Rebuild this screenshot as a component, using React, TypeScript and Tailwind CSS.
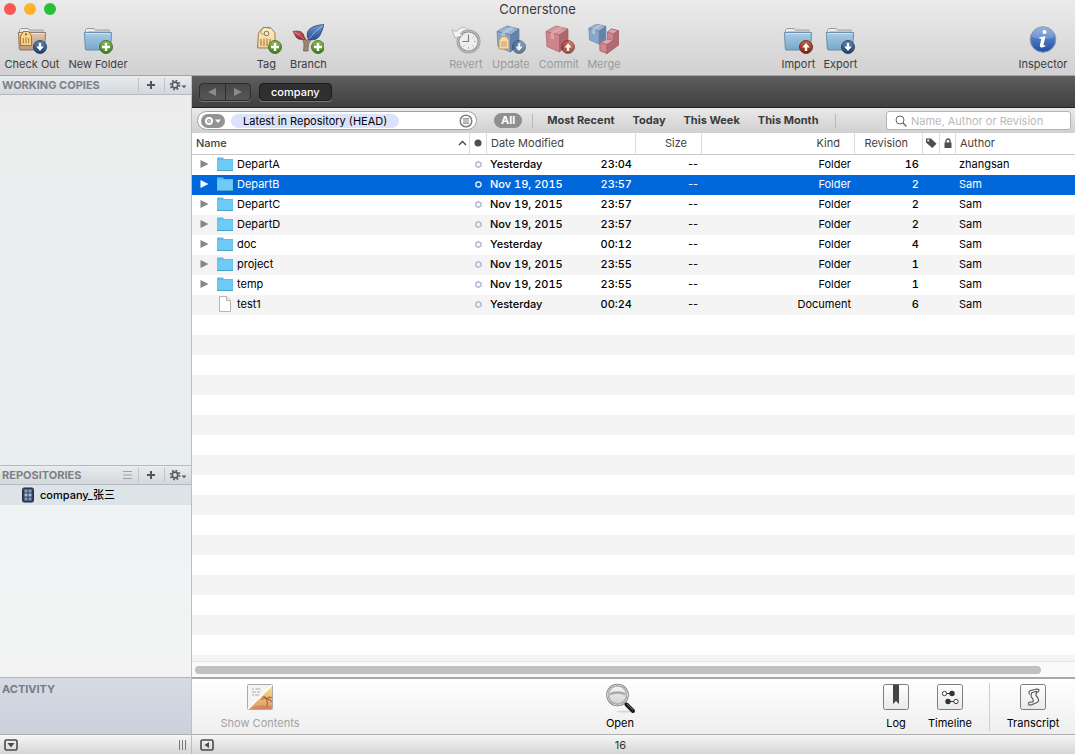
import type { ReactNode } from 'react';
import { clsx } from 'clsx';

type BadgeKind = 'down' | 'up' | 'plus';

interface Entry {
  name: string;
  date: string;
  time: string;
  kind: 'Folder' | 'Document';
  revision: number;
  author: string;
  selected?: boolean;
}

const entries: Entry[] = [
  { name: 'DepartA', date: 'Yesterday', time: '23:04', kind: 'Folder', revision: 16, author: 'zhangsan' },
  { name: 'DepartB', date: 'Nov 19, 2015', time: '23:57', kind: 'Folder', revision: 2, author: 'Sam', selected: true },
  { name: 'DepartC', date: 'Nov 19, 2015', time: '23:57', kind: 'Folder', revision: 2, author: 'Sam' },
  { name: 'DepartD', date: 'Nov 19, 2015', time: '23:57', kind: 'Folder', revision: 2, author: 'Sam' },
  { name: 'doc', date: 'Yesterday', time: '00:12', kind: 'Folder', revision: 4, author: 'Sam' },
  { name: 'project', date: 'Nov 19, 2015', time: '23:55', kind: 'Folder', revision: 1, author: 'Sam' },
  { name: 'temp', date: 'Nov 19, 2015', time: '23:55', kind: 'Folder', revision: 1, author: 'Sam' },
  { name: 'test1', date: 'Yesterday', time: '00:24', kind: 'Document', revision: 6, author: 'Sam' },
];

const filters = ['Most Recent', 'Today', 'This Week', 'This Month'];

/* ---------- shared gradients ---------- */

function Gradient({ id, from, to }: { id: string; from: string; to: string }) {
  return (
    <linearGradient id={id} x1="0" y1="0" x2="0" y2="1">
      <stop offset="0" stopColor={from} />
      <stop offset="1" stopColor={to} />
    </linearGradient>
  );
}

function SharedDefs() {
  return (
    <svg className="absolute size-0" aria-hidden="true">
      <defs>
        <Gradient id="folderBlue" from="#a9cce4" to="#78a8cb" />
        <Gradient id="folderTan" from="#e0c9b0" to="#b8967a" />
        <Gradient id="badgeDown" from="#5f86b4" to="#1b3c68" />
        <Gradient id="badgeUp" from="#c9644a" to="#7f1d0c" />
        <Gradient id="badgePlus" from="#8fbb5c" to="#3c7a1c" />
        <Gradient id="tagCream" from="#fdf0c8" to="#f0cf92" />
        <Gradient id="infoBlue" from="#7ba3dd" to="#1f4ba6" />
        <Gradient id="leafBlue" from="#6d9cd2" to="#254c8e" />
        <Gradient id="leafRed" from="#c65a5f" to="#8a2c36" />
        <Gradient id="lens" from="#fafafa" to="#cfcfcf" />
        <Gradient id="sunset" from="#f5e08a" to="#e09a68" />
        <Gradient id="frame" from="#ffffff" to="#e9e9e9" />
      </defs>
    </svg>
  );
}

/* ---------- toolbar icons ---------- */

function Icon({ children }: { children: ReactNode }) {
  return (
    <svg viewBox="0 0 32 32" className="size-8 shrink-0" fill="none" aria-hidden="true">
      {children}
    </svg>
  );
}

function Badge({ kind, x = 24, y = 23 }: { kind: BadgeKind; x?: number; y?: number }) {
  const fills = { down: 'url(#badgeDown)', up: 'url(#badgeUp)', plus: 'url(#badgePlus)' };
  const strokes = { down: '#1a3252', up: '#6e1c0e', plus: '#35661b' };
  const marks = {
    down: 'M-1.2-4h2.4v3.4h2.6L0 4l-3.8-4.6h2.6z',
    up: 'M-1.2 4h2.4V.6h2.6L0-4-3.8.6h2.6z',
    plus: 'M-1.2-4h2.4v2.8H4v2.4H1.2V4h-2.4V1.2H-4v-2.4h2.8z',
  };
  return (
    <g transform={`translate(${x} ${y})`}>
      <circle r="6.5" fill={fills[kind]} stroke={strokes[kind]} strokeWidth=".8" />
      <path d={marks[kind]} fill="#fff" />
    </g>
  );
}

function FolderShape({ fill, stroke }: { fill: string; stroke: string }) {
  return (
    <>
      <path d="M3.500 9V6.200L5 4.500h7l1.400 1.600h13.600V9" fill="#eceeef" stroke="#8b9195" strokeWidth=".9" />
      <path d="M5.500 7.500h21" stroke="#c2c6c9" />
      <path d="M2.400 8.500h27.200l-.9 16.200q-.1 1.300-1.300 1.300H4.600q-1.200 0-1.300-1.300z" fill={fill} stroke={stroke} strokeWidth=".8" />
      <path d="M3.400 9.600h25.200" stroke="#fff" strokeOpacity=".5" />
    </>
  );
}

interface CubeColors {
  top: string;
  left: string;
  right: string;
  band: string;
  line: string;
}

function Cube({ top, left, right, band, line }: CubeColors) {
  return (
    <g stroke={line} strokeWidth=".7" strokeLinejoin="round">
      <path d="M1 5.500 11 0l12 3-8.500 6z" fill={top} />
      <path d="M1 5.500 14.500 9v17L2 20.500z" fill={left} />
      <path d="M14.500 9 23 3v15.500L14.500 26z" fill={right} />
      <path d="M5.500 6.700 15.500 1l2.500.7-9 5.900v6l-3.500-1z" fill={band} stroke="none" opacity=".7" />
    </g>
  );
}

const blueCube: CubeColors = { top: '#9db4d1', left: '#8aa6c9', right: '#6382ad', band: '#b9d5e6', line: '#5d7aa3' };
const redCube: CubeColors = { top: '#d39a9d', left: '#cd858b', right: '#ae666f', band: '#e3aeb6', line: '#a8626a' };

function CheckOutIcon() {
  return (
    <Icon>
      <FolderShape fill="url(#folderTan)" stroke="#7b6653" />
      <path d="M4.500 12 7.500 7.500h5l3 4.500v9.500h-11z" fill="#f8d68f" stroke="#a4691f" strokeWidth=".9" />
      <circle cx="10" cy="10.300" r="1.100" fill="#8a5a24" />
      <path d="M7.300 14v5.500M10 13.300v6.200M12.700 14v5.500" stroke="#b1762f" />
      <Badge kind="down" />
    </Icon>
  );
}

function BlueFolderIcon({ badge }: { badge: BadgeKind }) {
  return (
    <Icon>
      <FolderShape fill="url(#folderBlue)" stroke="#56809e" />
      <Badge kind={badge} />
    </Icon>
  );
}

function TagIcon() {
  return (
    <Icon>
      <path d="M8.500 9 13 3.500h7.500L25 9v15H7.500z" fill="url(#tagCream)" stroke="#94703f" strokeWidth=".9" strokeLinejoin="round" />
      <circle cx="16.500" cy="9.500" r="2.300" fill="#efe9dc" stroke="#8d7248" />
      <path d="M15 10Q9 10.500 11.500 6T20 5" stroke="#8f8778" strokeWidth=".8" />
      <path d="M11 15v6.500M14 14.500V22M17 14.500V22M20 15v4" stroke="#a57336" />
      <Badge kind="plus" x={25} />
    </Icon>
  );
}

function BranchIcon() {
  return (
    <Icon>
      <path d="M11.500 27q1.500-7-.8-12l2.600-1.200 1.300 3 3.400-3.500 1.500 1.500Q15.200 20 16 27z" fill="#a08672" stroke="#665244" strokeWidth=".7" />
      <path d="M1 7.500q7-1.500 10 2 1.500 2.500 1.500 6Q6 16 4 13 2.700 10.500 1 7.500z" fill="url(#leafRed)" stroke="#7a2a31" strokeWidth=".7" />
      <path d="M2 8q5 2 10 7" stroke="#e2a9a8" strokeWidth=".7" />
      <path d="M32 .5Q18 1.500 15.500 8q-1.200 4 1 7.500 7.500 1.500 11-3.500Q30 8 32 .5z" fill="url(#leafBlue)" stroke="#1d3a6d" strokeWidth=".7" />
      <path d="M31 1.500Q22 7 17 15" stroke="#a7c5ea" strokeWidth=".8" />
      <Badge kind="plus" x={26} />
    </Icon>
  );
}

function RevertIcon() {
  return (
    <Icon>
      <circle cx="18.500" cy="17.500" r="10.500" fill="#eee" stroke="#9b9b9b" strokeWidth="3" />
      <circle cx="18.500" cy="17.500" r="10.800" stroke="#c6c6c6" strokeWidth="1" />
      <path d="M18.500 10.500v7h-6" stroke="#808080" strokeWidth="1.200" />
      <path d="M18.500 24.500v-1.300M25.500 17.500h-1.300M23.500 12.500l-.9.9M23.500 22.500l-.9-.9M13.500 22.500l.9-.9" stroke="#999" />
      <path d="M2 6l3 8 8-2.500-2.800-1.800Q13 5.500 18 6q-3-5-9.500-.8L6.500 7.500z" fill="#f3f3f3" stroke="#a8a8a8" strokeWidth=".8" />
    </Icon>
  );
}

function UpdateIcon() {
  return (
    <Icon>
      <g transform="translate(1 2)">
        <Cube {...blueCube} />
      </g>
      <path d="M4 16 7 12.500h4l3 3.500v9H4z" fill="#f4d8a6" stroke="#bb915c" strokeWidth=".9" />
      <path d="M7 17.500V23M9 17v6M11 17.500V23" stroke="#c2915a" strokeWidth=".8" />
      <g opacity=".65">
        <Badge kind="down" />
      </g>
    </Icon>
  );
}

function CommitIcon() {
  return (
    <Icon>
      <g transform="translate(2 2)">
        <Cube {...redCube} />
      </g>
      <g opacity=".75">
        <Badge kind="up" x={25} />
      </g>
    </Icon>
  );
}

function MergeIcon() {
  return (
    <Icon>
      <g transform="translate(0 0) scale(.78)">
        <Cube {...blueCube} />
      </g>
      <g stroke="#a8626a" strokeWidth=".7" strokeLinejoin="round">
        <path d="M12 18.500 19.500 15V8l4-3 7 1.800V21L19 29.500l-7-3z" fill="#cd858b" />
        <path d="M12 18.500l7 2v9l-7-3z" fill="#d0888f" />
        <path d="M12 18.500l7.500-3.500 6 1.500-6.500 4z" fill="#dca6aa" />
        <path d="M19.500 8l4-3 7 1.800-5 3z" fill="#dca6aa" />
        <path d="M25.500 9.800l5-3V21L19 29.500v-9l6.500-4z" fill="#b06b73" />
      </g>
    </Icon>
  );
}

function InspectorIcon() {
  return (
    <Icon>
      <circle cx="16" cy="15.500" r="12.800" fill="url(#infoBlue)" stroke="#8d99ad" />
      <path d="M4.500 13a11.600 11.600 0 0 1 23 0q-11 4-23 0z" fill="#fff" fillOpacity=".18" />
      <circle cx="17.500" cy="8" r="2.100" fill="#fff" />
      <path d="M12.500 13.200l6-.9-2 8.500q-.2 1.200 2 .2l-.4 1.400q-5.500 2.600-5.300-1l1.400-6.200q.1-.9-1.900-.8z" fill="#fff" />
    </Icon>
  );
}

/* ---------- bottom panel icons ---------- */

function PanelIcon({ children }: { children: ReactNode }) {
  return (
    <svg viewBox="0 0 28 28" className="size-7 shrink-0" fill="none" aria-hidden="true">
      {children}
    </svg>
  );
}

function FramedIcon({ children }: { children: ReactNode }) {
  return (
    <PanelIcon>
      <rect x="1.500" y="1.500" width="25" height="25" rx="2" fill="url(#frame)" stroke="#7d7d7d" />
      {children}
    </PanelIcon>
  );
}

function ContentsIcon() {
  return (
    <PanelIcon>
      <rect x="1.500" y="1.500" width="25" height="25" rx="1" fill="#f4f4f4" stroke="#aaa" />
      <path d="M26 3v23H3z" fill="url(#sunset)" />
      <path d="M26 2 2 26" stroke="#fff" strokeWidth="1.200" />
      <path d="M6 6h2M9.500 6h5M6 9h4M11 9h3M6 12h2M9 12h4" stroke="#aaa" />
      <path d="M21 25q1-5-.5-9M20.500 16q-3-2-5 1M20.500 16q-1-3-4-2M20.500 16q3-3 5-1M20.500 16q4 0 5 3" stroke="#b2603f" strokeWidth="1.200" />
      <path d="M8 24q6-3 18-1v3H5z" fill="#d07f5c" fillOpacity=".7" />
    </PanelIcon>
  );
}

function MagnifierIcon() {
  return (
    <svg viewBox="0 0 32 32" className="size-8 shrink-0" fill="none" aria-hidden="true">
      <ellipse cx="21" cy="28.500" rx="8" ry="1" fill="#000" fillOpacity=".12" />
      <path d="M19.500 19l3 3" stroke="#999" strokeWidth="2.400" />
      <path d="M22.500 21.500l6.500 6.500" stroke="#1c1c1c" strokeWidth="4" strokeLinecap="round" />
      <path d="M23 21l6 6" stroke="#8a8a8a" strokeWidth=".8" />
      <circle cx="13.500" cy="12" r="10.300" fill="url(#lens)" stroke="#7b7b7b" strokeWidth="2" />
      <circle cx="13.500" cy="12" r="10.100" stroke="#dedede" strokeWidth="1" />
      <circle cx="13.500" cy="12" r="8.700" stroke="#9a9a9a" strokeWidth=".7" />
      <path d="M5.500 12.500q0-2 1.500-3 6.500-2.500 13 0 1.500 1 1.500 3-8-3.500-16 0z" fill="#9a9a9a" fillOpacity=".8" />
    </svg>
  );
}

function LogIcon() {
  return (
    <FramedIcon>
      <path d="M11 1.500h6V21l-3-3-3 3z" fill="#444" />
    </FramedIcon>
  );
}

function TimelineIcon() {
  return (
    <FramedIcon>
      <path d="M9 10.500h7M12 18.500h8" stroke="#333" strokeWidth="1.200" />
      <circle cx="8.500" cy="10.500" r="2.200" fill="#f4f4f4" stroke="#444" />
      <circle cx="16" cy="10.500" r="2.700" fill="#333" />
      <circle cx="12" cy="18.500" r="2.700" fill="#333" />
      <circle cx="20" cy="18.500" r="2.200" fill="#f4f4f4" stroke="#444" />
    </FramedIcon>
  );
}

function TranscriptIcon() {
  return (
    <FramedIcon>
      <path
        d="M11 11.500q-2.500-3 .5-4l6.500-1.500q3 0 1.500 2.500l-2 1q-1.500 2.500 1 5 2.500 3.500-.5 5l-6 2.500q-3 .5-2.500-1.800.8-1.500 3.500-1 2.500-1 .2-4Q11 13 13 9.500l5-1.200"
        stroke="#555"
        strokeWidth="1.100"
        strokeLinejoin="round"
      />
    </FramedIcon>
  );
}

/* ---------- small glyphs ---------- */

function GearMenuIcon() {
  return (
    <svg viewBox="0 0 18 12" className="h-3 w-[18px]" fill="none" aria-hidden="true">
      <circle cx="6" cy="6" r="2.800" stroke="#565b60" strokeWidth="1.700" />
      <circle cx="6" cy="6" r="4.500" stroke="#565b60" strokeWidth="1.800" strokeDasharray="1.700 1.834" />
      <path d="M12.500 6.500h5L15 9.200z" fill="#565b60" />
    </svg>
  );
}

function PlusIcon() {
  return (
    <svg viewBox="0 0 10 10" className="size-2.5" aria-hidden="true">
      <path d="M4 1h2v3h3v2H6v3H4V6H1V4h3z" fill="#50565c" />
    </svg>
  );
}

function SmallFolder() {
  return (
    <svg viewBox="0 0 16 16" className="h-4 w-4 shrink-0" aria-hidden="true">
      <path d="M0 1.500h6l1 1.500h9v12H0z" fill="#5bbde8" />
      <path d="M.5 4h15v10H.5z" fill="#6fcbf5" />
      <path d="M0 14.500h16" stroke="#48a3cf" />
    </svg>
  );
}

function SmallDocument() {
  return (
    <svg viewBox="0 0 16 16" className="h-4 w-4 shrink-0" aria-hidden="true">
      <path d="M2.500.5h7l4 4v11h-11z" fill="#fff" stroke="#b5b5b5" />
      <path d="M9.500.5v4h4" fill="#eee" stroke="#b5b5b5" />
    </svg>
  );
}

function ServerIcon() {
  return (
    <svg viewBox="0 0 14 16" className="h-4 w-3.5 shrink-0" fill="none" aria-hidden="true">
      <rect x="1.500" y="1" width="11" height="14" rx="1.500" fill="#33415f" stroke="#232c42" />
      <path d="M3.500 2.500h3v3h-3zM7.500 2.500h3v3h-3z" fill="#8b9cbd" />
      <path d="M3.500 6.500h3v3h-3zM7.500 6.500h3v3h-3z" fill="#a9bbd8" />
      <path d="M3.500 10.500h3v3h-3zM7.500 10.500h3v3h-3z" fill="#8294b8" />
    </svg>
  );
}

function PaneToggle({ label, d }: { label: string; d: string }) {
  return (
    <button type="button" aria-label={label}>
      <svg viewBox="0 0 14 12" className="h-3 w-3.5" fill="none" aria-hidden="true">
        <rect x="1" y="1" width="12" height="10" rx="1.500" stroke="#4a4a4a" strokeWidth="1.600" />
        <path d={d} fill="#4a4a4a" />
      </svg>
    </button>
  );
}

/* ---------- toolbar ---------- */

interface ToolProps {
  label: string;
  className: string;
  disabled?: boolean;
  children: ReactNode;
}

function Tool({ label, className, disabled = false, children }: ToolProps) {
  return (
    <button
      type="button"
      disabled={disabled}
      className={clsx('flex flex-col items-center whitespace-nowrap', disabled ? 'text-[#9b9b9b]' : 'text-[#3c3c3c]', className)}
    >
      {children}
      <span className="leading-4">{label}</span>
    </button>
  );
}

function TitleBar() {
  return (
    <header className="flex h-[76px] shrink-0 flex-col border-b border-[#a5a5a5] bg-linear-to-b from-[#ebebeb] to-[#d1d1d1]">
      <div className="grid h-6 grid-cols-[1fr_auto_1fr] items-start pt-[3px]">
        <div className="flex gap-2 pl-1">
          <button type="button" aria-label="Close" className="size-3 rounded-full bg-[#fc5753]" />
          <button type="button" aria-label="Minimize" className="size-3 rounded-full bg-[#fdb32a]" />
          <button type="button" aria-label="Zoom" className="size-3 rounded-full bg-[#27c138]" />
        </div>
        <h1 className="text-[13px] leading-3 text-[#3a3a3a]">Cornerstone</h1>
      </div>
      <div className="flex pr-[7px] pl-1">
        <div className="flex gap-2">
          <Tool label="Check Out" className="w-14"><CheckOutIcon /></Tool>
          <Tool label="New Folder" className="w-15"><BlueFolderIcon badge="plus" /></Tool>
        </div>
        <div className="flex-31" />
        <div className="flex gap-2">
          <Tool label="Tag" className="w-7"><TagIcon /></Tool>
          <Tool label="Branch" className="w-10"><BranchIcon /></Tool>
        </div>
        <div className="flex-30" />
        <div className="flex gap-2">
          <Tool label="Revert" className="w-[34px]" disabled><RevertIcon /></Tool>
          <Tool label="Update" className="w-10" disabled><UpdateIcon /></Tool>
          <Tool label="Commit" className="w-10" disabled><CommitIcon /></Tool>
          <Tool label="Merge" className="w-[34px]" disabled><MergeIcon /></Tool>
        </div>
        <div className="flex-40" />
        <div className="flex gap-2">
          <Tool label="Import" className="w-[34px]"><BlueFolderIcon badge="up" /></Tool>
          <Tool label="Export" className="w-[34px]"><BlueFolderIcon badge="down" /></Tool>
        </div>
        <div className="flex-40" />
        <Tool label="Inspector" className="w-[50px]"><InspectorIcon /></Tool>
      </div>
    </header>
  );
}

/* ---------- sidebar ---------- */

function SidebarHeader({ title, listToggle = false }: { title: string; listToggle?: boolean }) {
  return (
    <div className="flex h-[19px] shrink-0 items-center border-b border-b-[#b4babf] bg-linear-to-b from-[#e9ecee] to-[#d3d8dc] pl-0.5">
      <h2 className="flex-1 font-bold text-[#7b8187]">{title}</h2>
      {listToggle && (
        <button type="button" aria-label="List" className="mr-1.5">
          <svg viewBox="0 0 9 8" className="h-2 w-[9px]" aria-hidden="true">
            <path d="M0 .5h9M0 4h9M0 7.500h9" stroke="#9da2a6" />
          </svg>
        </button>
      )}
      <button type="button" aria-label={`Add to ${title}`} className="flex h-3.5 w-[26px] items-center justify-center border-l border-[#bfc4c8] pr-0.5">
        <PlusIcon />
      </button>
      <button type="button" aria-label={`${title} actions`} className="flex h-3.5 w-[27px] items-center justify-center border-l border-[#bfc4c8]">
        <GearMenuIcon />
      </button>
    </div>
  );
}

function Sidebar() {
  return (
    <aside className="flex w-48 shrink-0 flex-col border-r border-[#b9bfc6] bg-[#f2f3f4]">
      <SidebarHeader title="WORKING COPIES" />
      <div className="flex-[29] border-b border-[#b4babf] bg-linear-to-b from-[#ececec] to-[#e9eef1]" />
      <SidebarHeader title="REPOSITORIES" listToggle />
      <div className="flex-[15] bg-linear-to-b from-[#eff3f5] to-[#f3f3f3]">
        <a href="#company" className="flex h-5 items-center gap-[5px] bg-[#dce4e8] pl-[21px] text-black">
          <ServerIcon />
          <span className="font-medium">company_张三</span>
        </a>
      </div>
      <section className="h-[57px] shrink-0 border-t border-[#b3b8c0] bg-linear-to-b from-[#d5dae4] to-[#cbd1dc] pt-[3px] pl-0.5">
        <h2 className="leading-4 font-bold text-[#757c87]">ACTIVITY</h2>
      </section>
      <div className="flex h-5 shrink-0 items-center justify-between border-t border-[#b0b0b0] bg-linear-to-b from-[#f6f6f6] to-[#d6d6d6] pr-1 pl-1">
        <PaneToggle label="Hide activity" d="M3.500 4h7L7 8.500z" />
        <svg viewBox="0 0 9 10" className="h-2.5 w-[9px]" aria-hidden="true">
          <path d="M1.500 0v10M4.500 0v10M7.500 0v10" stroke="#777" />
        </svg>
      </div>
    </aside>
  );
}

/* ---------- browser ---------- */

function PathBar() {
  return (
    <nav className="flex h-8 shrink-0 items-center gap-2 border-b border-[#222] bg-linear-to-b from-[#5e5e5e] to-[#404040] pl-[7px]">
      <div className="flex h-[18px] w-[52px] rounded-[4px] border border-[#2e2e2e] bg-linear-to-b from-[#474747] to-[#575757] shadow-[0_1px_0_#777]">
        <button type="button" aria-label="Back" className="flex flex-1 items-center justify-center border-r border-[#2e2e2e]">
          <svg viewBox="0 0 10 10" className="size-2.5" aria-hidden="true">
            <path d="M9 1v8L1 5z" fill="#8b8b8b" />
          </svg>
        </button>
        <button type="button" aria-label="Forward" className="flex flex-1 items-center justify-center">
          <svg viewBox="0 0 10 10" className="size-2.5" aria-hidden="true">
            <path d="M1 1v8l8-4z" fill="#8b8b8b" />
          </svg>
        </button>
      </div>
      <button type="button" className="h-[18px] rounded-[4px] border border-[#1d1d1d] bg-[#2f2f2f] px-[11px] pb-px leading-4 font-medium text-white shadow-[0_1px_0_#777]">
        company
      </button>
    </nav>
  );
}

function FilterBar() {
  return (
    <div className="flex h-[25px] shrink-0 items-center bg-linear-to-b from-[#e9e9e9] to-[#d0d0d0] pr-1 pl-[5px]">
      <div className="flex h-[19px] w-[280px] items-center gap-1.5 rounded-full border border-[#a2a2a2] bg-white px-[3px]">
        <button type="button" aria-label="Filter options" className="flex h-3.5 w-6 items-center justify-center rounded-full bg-[#929292]">
          <svg viewBox="0 0 18 10" className="h-2.5 w-[18px]" fill="none" aria-hidden="true">
            <circle cx="5" cy="5" r="3" stroke="#fff" strokeWidth="2" />
            <circle cx="5" cy="5" r=".8" fill="#fff" />
            <path d="M11 3.500h6l-3 3.500z" fill="#fff" />
          </svg>
        </button>
        <button type="button" className="h-3.5 rounded-full bg-[#dbe3fa] px-3 leading-3 text-black">
          Latest in Repository (HEAD)
        </button>
        <button type="button" aria-label="Saved filters" className="ml-auto">
          <svg viewBox="0 0 14 14" className="size-3.5" fill="none" aria-hidden="true">
            <circle cx="7" cy="7" r="5.800" stroke="#808080" strokeWidth="1.500" />
            <path d="M4 4.800h6M4 7h6M4 9.200h6" stroke="#808080" strokeWidth="1.200" />
          </svg>
        </button>
      </div>
      <button type="button" className="ml-[17px] h-[15px] rounded-full bg-[#8f8f8f] px-[7px] leading-[15px] font-bold text-white">
        All
      </button>
      <div className="ml-2.5 h-3.5 border-l border-[#b8b8b8]" />
      <div className="flex gap-[18px] px-3.5 pb-0.5 font-bold whitespace-nowrap text-[#3a3a3a]">
        {filters.map((filter) => (
          <button key={filter} type="button">{filter}</button>
        ))}
      </div>
      <div className="ml-0.5 h-3.5 border-l border-[#b8b8b8]" />
      <label className="ml-auto flex h-[19px] w-[185px] items-center gap-1 rounded-[3px] border border-[#b3b3b3] bg-white pl-2">
        <svg viewBox="0 0 12 12" className="size-3 shrink-0" fill="none" aria-hidden="true">
          <circle cx="5" cy="5" r="4" stroke="#666" />
          <path d="M8 8l3.500 3.500" stroke="#666" strokeWidth="1.200" />
        </svg>
        <input
          type="search"
          aria-label="Search"
          placeholder="Name, Author or Revision"
          className="w-full min-w-0 bg-transparent outline-none placeholder:text-[#b9b9b9]"
        />
      </label>
    </div>
  );
}

function EntryRow({ entry }: { entry: Entry }) {
  const { name, date, time, kind, revision, author, selected } = entry;
  return (
    <tr className={clsx('h-5 [&>td]:pb-0.5', selected ? 'bg-[#0068da] text-white' : 'text-black')}>
      <td>
        <div className="flex items-center pl-2">
          <svg viewBox="0 0 9 8" className="mr-2 h-2 w-[9px] shrink-0" aria-hidden="true">
            {kind === 'Folder' && <path d="M.500 0v8l8-4z" fill={selected ? '#fff' : '#858585'} />}
          </svg>
          {kind === 'Folder' ? <SmallFolder /> : <SmallDocument />}
          <span className="ml-1">{name}</span>
        </div>
      </td>
      <td>
        <svg viewBox="0 0 7 7" className="mx-auto size-[7px]" fill="none" aria-hidden="true">
          <circle cx="3.500" cy="3.500" r="2.700" stroke={selected ? '#fff' : '#a9a9c9'} strokeWidth="1.200" />
        </svg>
      </td>
      <td className="font-medium tabular-nums">
        <div className="flex justify-between pr-1 pl-[3px]">
          <span>{date}</span>
          <span>{time}</span>
        </div>
      </td>
      <td className="pr-1 text-right">--</td>
      <td className="pr-1 text-right">{kind}</td>
      <td className="pr-1 text-right font-medium tabular-nums">{revision}</td>
      <td />
      <td />
      <td className="pl-[3px]">{author}</td>
    </tr>
  );
}

function Listing() {
  return (
    <div className="min-h-0 flex-1 overflow-hidden bg-[linear-gradient(#fff_50%,#f4f4f4_50%)] bg-[length:100%_40px] bg-[position:0_22px]">
      <table className="w-full table-fixed border-separate border-spacing-0">
        <colgroup>
          <col />
          <col className="w-[17px]" />
          <col className="w-[149px]" />
          <col className="w-[66px]" />
          <col className="w-[153px]" />
          <col className="w-[68px]" />
          <col className="w-[17px]" />
          <col className="w-4" />
          <col className="w-[119px]" />
        </colgroup>
        <thead>
          <tr className="h-[22px] bg-white text-left text-[#3f3f3f] [&>th]:border-b [&>th]:border-[#c9c9c9] [&>th]:pb-0.5 [&>th]:font-normal [&>th:not(:last-child)]:border-r [&>th:not(:last-child)]:border-r-[#dcdcdc]">
            <th>
              <div className="flex items-center justify-between pr-0.5 pl-1 font-medium">
                Name
                <svg viewBox="0 0 9 6" className="h-1.5 w-[9px]" fill="none" aria-hidden="true">
                  <path d="M1 5l3.500-3.500L8 5" stroke="#444" strokeWidth="1.400" />
                </svg>
              </div>
            </th>
            <th aria-label="Status">
              <svg viewBox="0 0 8 8" className="mx-auto size-2" aria-hidden="true">
                <circle cx="4" cy="4" r="3.500" fill="#4f4f4f" />
              </svg>
            </th>
            <th className="pl-1">Date Modified</th>
            <th className="pr-3.5 text-right">Size</th>
            <th className="pr-3.5 text-right">Kind</th>
            <th className="pr-3.5 text-right">Revision</th>
            <th aria-label="Tag">
              <svg viewBox="0 0 12 12" className="mx-auto size-3" aria-hidden="true">
                <path d="M1 1.500h5l5.500 5.300-4.200 4.200L1 5.500z" fill="#4f4f4f" />
                <circle cx="3.200" cy="3.600" r="1" fill="#fff" />
              </svg>
            </th>
            <th aria-label="Lock">
              <svg viewBox="0 0 10 12" className="mx-auto h-3 w-2.5" fill="none" aria-hidden="true">
                <rect x="1.500" y="5.500" width="7" height="5.500" fill="#4f4f4f" />
                <path d="M3 6V4a2 2 0 0 1 4 0v2" stroke="#4f4f4f" strokeWidth="1.300" />
              </svg>
            </th>
            <th className="pl-1">Author</th>
          </tr>
        </thead>
        <tbody>
          {entries.map((entry) => (
            <EntryRow key={entry.name} entry={entry} />
          ))}
        </tbody>
      </table>
    </div>
  );
}

function PanelButton({ label, className, disabled = false, children }: ToolProps) {
  return (
    <button
      type="button"
      disabled={disabled}
      className={clsx('flex flex-col items-center justify-between whitespace-nowrap', disabled ? 'text-[#a3a3a3]' : 'text-black', className)}
    >
      {children}
      <span className="leading-4">{label}</span>
    </button>
  );
}

function BottomPanel() {
  return (
    <div className="flex h-[57px] shrink-0 border-t-2 border-[#a9a9a9] bg-linear-to-b from-white to-[#eeeeee] pt-1 pb-[3px] pl-7">
      <PanelButton label="Show Contents" className="w-20" disabled><ContentsIcon /></PanelButton>
      <div className="flex-21" />
      <PanelButton label="Open" className="w-8"><MagnifierIcon /></PanelButton>
      <div className="flex-17" />
      <PanelButton label="Log" className="w-7"><LogIcon /></PanelButton>
      <PanelButton label="Timeline" className="ml-4 w-12"><TimelineIcon /></PanelButton>
      <div className="mr-4 ml-[15px] border-l border-[#cfcfcf]" />
      <PanelButton label="Transcript" className="mr-[15px] w-[54px]"><TranscriptIcon /></PanelButton>
    </div>
  );
}

function Browser() {
  return (
    <main className="flex min-w-0 flex-1 flex-col bg-white">
      <PathBar />
      <FilterBar />
      <Listing />
      <div className="h-4 shrink-0 border-t border-[#e6e6e6] bg-[#fafafa] px-[3px] pt-1">
        <div className="h-2 w-[96.5%] rounded-full bg-[#c1c1c1]" />
      </div>
      <BottomPanel />
      <footer className="flex h-5 shrink-0 items-center border-t border-[#b0b0b0] bg-linear-to-b from-[#f6f6f6] to-[#d6d6d6] pr-12 pl-2">
        <PaneToggle label="Hide sidebar" d="M9 3v6L4.500 6z" />
        <span className="flex-1 text-center text-[#333]">16</span>
      </footer>
    </main>
  );
}

export default function App() {
  return (
    <div className="flex h-screen flex-col overflow-hidden font-['Inter','Noto_Sans_CJK_SC',sans-serif] text-[11px] leading-4">
      <SharedDefs />
      <TitleBar />
      <div className="flex min-h-0 flex-1">
        <Sidebar />
        <Browser />
      </div>
    </div>
  );
}
